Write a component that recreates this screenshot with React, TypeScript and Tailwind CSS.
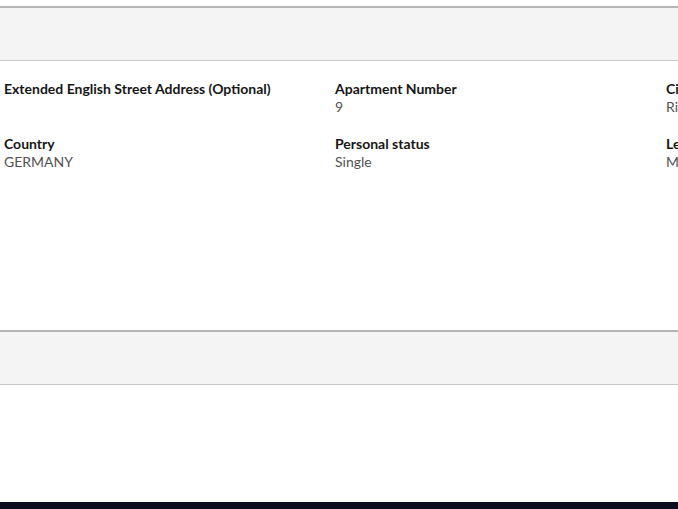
const rows = [
  [
    { label: "Extended English Street Address (Optional)", value: "" },
    { label: "Apartment Number", value: "9" },
    { label: "City", value: "Riga" },
  ],
  [
    { label: "Country", value: "GERMANY" },
    { label: "Personal status", value: "Single" },
    { label: "Legal status", value: "Married" },
  ],
];

function Field({ label, value }: { label: string; value: string }) {
  return (
    <div className="w-[331px] shrink-0 px-1">
      <p className="text-[14px] leading-[18px] font-bold text-[#161616]">{label}</p>
      <p className="text-[14px] leading-[18px] text-[#525252] min-h-[18px]">{value}</p>
    </div>
  );
}

export default function App() {
  return (
    <div
      className="h-[509px] w-[678px] overflow-hidden bg-white flex flex-col"
      style={{ fontFamily: "Lato, 'Open Sans', sans-serif" }}
    >
      <div className="mt-[6px] h-[55px] shrink-0 bg-[#f4f4f4] border-t-2 border-b border-t-[#b4b4b4] border-b-[#c6c6c6]" />
      <div className="pt-[19px] flex flex-col gap-[19px] h-[269px] shrink-0">
        {rows.map((row, i) => (
          <div key={i} className="flex">
            {row.map((f) => (
              <Field key={f.label} label={f.label} value={f.value} />
            ))}
          </div>
        ))}
      </div>
      <div className="h-[55px] shrink-0 bg-[#f4f4f4] border-t-2 border-b border-t-[#b4b4b4] border-b-[#c6c6c6]" />
      <div className="flex-1" />
      <div className="h-[7px] shrink-0 bg-[#0b0c1e]" />
    </div>
  );
}
